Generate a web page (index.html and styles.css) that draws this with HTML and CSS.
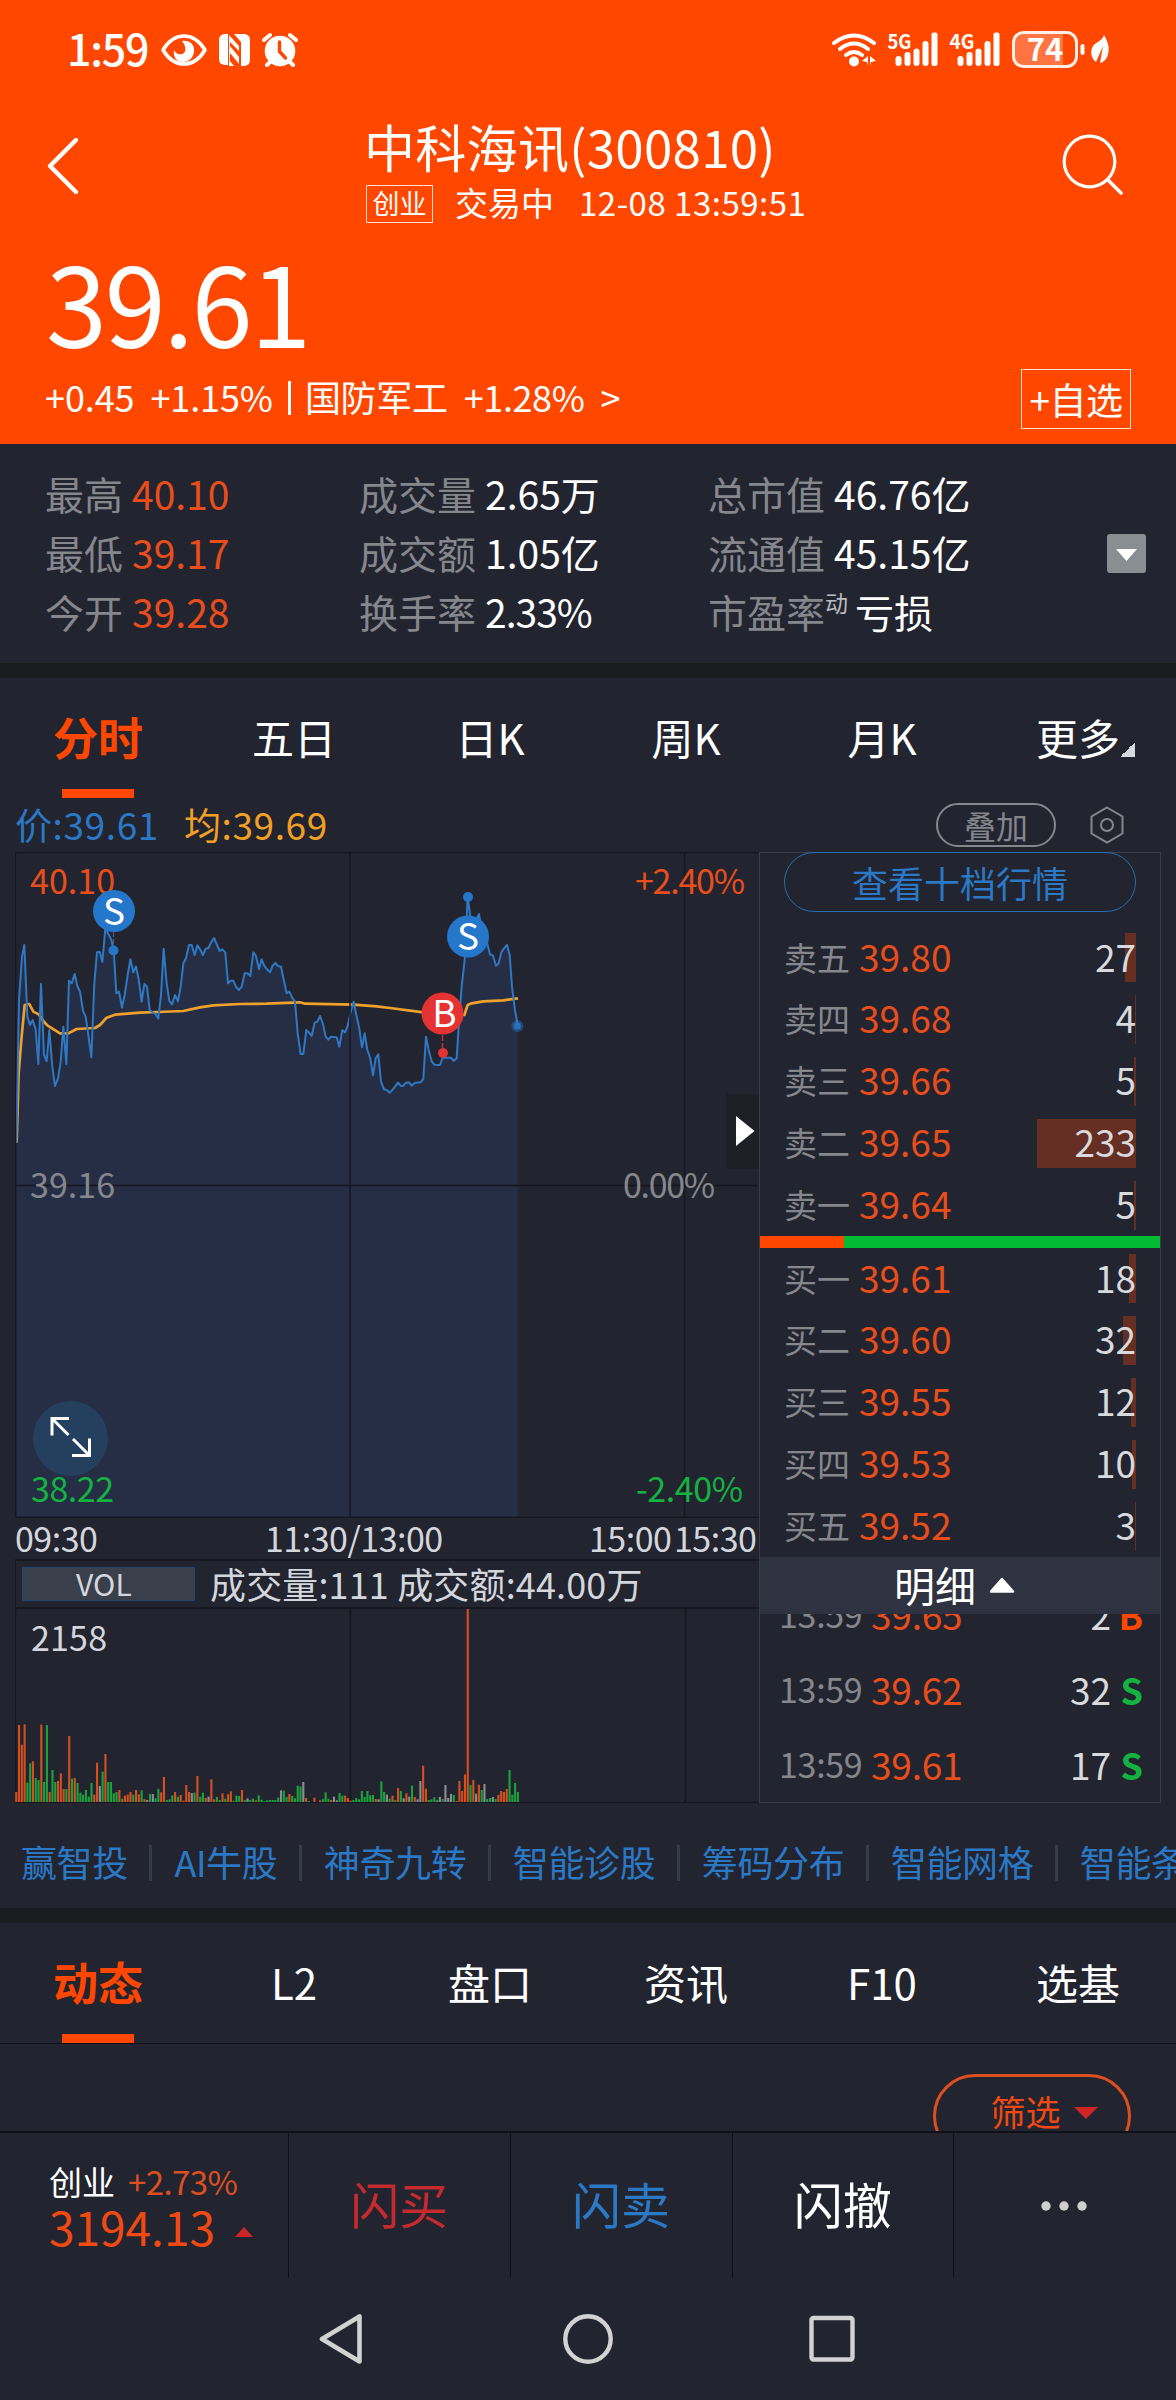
FILE: index.html
```html
<!DOCTYPE html>
<html lang="zh-CN">
<head>
<meta charset="utf-8">
<title>中科海讯(300810)</title>
<link rel="stylesheet" href="styles.css">
</head>
<body>
<div class="phone">
  <header class="top">
    <div class="status">
      <div class="status-left">
        <span class="clock">1:59</span>
        <svg class="ico-eye" width="46" height="34" viewBox="0 0 46 34"><path d="M2 17C8 7 15 3 23 3s15 4 21 14c-6 10-13 14-21 14S8 27 2 17z" fill="none" stroke="#fff" stroke-width="3.6" stroke-linejoin="round"/><path d="M21 8c8-1 13 4 12 11-1 6-5 10-11 10s-10-4-9-12c2 4 5 5 8 4 4-1 5-7 0-13z" fill="#fff"/></svg>
        <svg class="ico-nfc" width="31" height="34" viewBox="0 0 31 34"><path d="M7 1h2v31H7c-5 0-7-2-7-7V8c0-5 2-7 7-7zM24 1h-9l7 8v24h2c5 0 7-2 7-7V8c0-5-2-7-7-7z" fill="#fff"/><path d="M10 2v31h5l-4-5v-8l9 11v-7L11 13V9l9 9v-5L10 2z" fill="#fff"/></svg>
        <svg class="ico-alarm" width="36" height="35" viewBox="0 0 36 35"><circle cx="18" cy="19" r="15.3" fill="#fff"/><path d="M2 8l6-5M34 8l-6-5M8 30l-3 3M28 30l3 3" stroke="#fff" stroke-width="4" stroke-linecap="round"/><path d="M17.500 10v9.500l6 6.500" fill="none" stroke="#ff4700" stroke-width="3.400" stroke-linecap="round"/></svg>
      </div>
      <svg class="status-right" width="280" height="40" viewBox="830 30 280 40">
        <g fill="none" stroke="#fff" stroke-width="4" stroke-linecap="round"><path d="M834 43q20-15 40 0M840 49q14-11 28 0M846 55q8-6 16 0"/></g>
        <circle cx="854" cy="61.500" r="5" fill="#fff"/>
        <path d="M862 61l6-5v10l-1-4zM876 61l-6-5v10l1-4z" fill="#fff"/>
        <g fill="#fff">
          <rect x="895.500" y="56" width="6" height="10" rx="3"/><rect x="904.500" y="52" width="6" height="14" rx="3"/><rect x="913.500" y="48.500" width="6" height="17.500" rx="3"/><rect x="922.500" y="41" width="6" height="25" rx="3"/><rect x="931.500" y="32.500" width="6" height="33.500" rx="2"/>
          <rect x="957.500" y="56" width="6" height="10" rx="3"/><rect x="966.500" y="52" width="6" height="14" rx="3"/><rect x="975.500" y="48.500" width="6" height="17.500" rx="3"/><rect x="984.500" y="41" width="6" height="25" rx="3"/><rect x="993.500" y="32.500" width="6" height="33.500" rx="2"/>
        </g>
        <text class="net" x="887.500" y="49" textLength="24" lengthAdjust="spacingAndGlyphs">5G</text>
        <text class="net" x="949.500" y="49" textLength="25" lengthAdjust="spacingAndGlyphs">4G</text>
        <path d="M1025 33h38v33h-38q-11 0-11-10V43q0-10 11-10z" fill="#ff7441"/>
        <rect x="1013.500" y="32.500" width="63" height="34" rx="10" fill="none" stroke="#ffefe8" stroke-width="3"/>
        <text class="batt" x="1045" y="61" text-anchor="middle">74</text>
        <rect x="1080.500" y="44" width="4" height="11" rx="2" fill="#fff"/>
        <path d="M1104 35c4 7 6 13 4 19-1 5-4 8-8 9l3-17-7 16c-4-3-6-9-4-14 2-6 10-6 12-13z" fill="#fff"/>
      </svg>
    </div>
    <div class="titlebar">
      <svg width="36" height="60" viewBox="0 0 36 60"><path d="M32 6L6 32l26 26" transform="translate(-1 -2)" fill="none" stroke="#fff" stroke-width="4.400" stroke-linecap="round" stroke-linejoin="round"/></svg>
      <div class="title-mid">
        <h1>中科海讯(300810)</h1>
        <div class="sub"><span class="board">创业</span><span class="state">交易中</span><span class="stamp">12-08 13:59:51</span></div>
      </div>
      <svg width="62" height="62" viewBox="0 0 62 62"><circle cx="27.500" cy="28.500" r="25.300" fill="none" stroke="#fff" stroke-width="3.200"/><path d="M45.500 46.500L59 60" stroke="#fff" stroke-width="3.600" stroke-linecap="round"/></svg>
    </div>
    <div class="price">39.61</div>
    <div class="change">
      <span>+0.45</span><span class="g1">+1.15%</span><i class="bar"></i><span class="g0">国防军工</span><span class="g2">+1.28%</span><span class="g3">&gt;</span>
      <button class="fav">+自选</button>
    </div>
  </header>

  <section class="stats">
    <dl><dt>最高</dt><dd class="up">40.10</dd></dl><dl><dt>成交量</dt><dd>2.65万</dd></dl><dl><dt>总市值</dt><dd>46.76亿</dd></dl>
    <dl><dt>最低</dt><dd class="up">39.17</dd></dl><dl><dt>成交额</dt><dd>1.05亿</dd></dl><dl class="with-more"><dt>流通值</dt><dd>45.15亿</dd><svg class="more-btn" width="39" height="39" viewBox="0 0 39 39"><rect width="39" height="39" rx="3" fill="#898e92"/><path d="M9 15h21L19.500 27z" fill="#fff"/></svg></dl>
    <dl><dt>今开</dt><dd class="up">39.28</dd></dl><dl><dt>换手率</dt><dd class="tight">2.33%</dd></dl><dl><dt>市盈率<sup>动</sup></dt><dd>亏损</dd></dl>
  </section>

  <nav class="tabs period"><a class="on">分时</a><a>五日</a><a>日K</a><a>周K</a><a>月K</a><a class="more">更多</a></nav>

  <div class="legend">
    <span class="now">价:39.61</span><span class="avg">均:39.69</span>
    <button class="overlay">叠加</button>
    <svg width="34" height="38" viewBox="0 0 34 38"><path d="M17 1.500l15.500 9v17L17 36.500l-15.500-9v-17z" fill="none" stroke="#85878d" stroke-width="2"/><circle cx="17" cy="19" r="6" fill="none" stroke="#85878d" stroke-width="2"/></svg>
  </div>

  <main class="market">
    <section class="charts">
      <svg class="trend" width="745" height="666" viewBox="15 852 745 666">
        <g transform="translate(0 840) scale(.33333)" fill="none" stroke-linejoin="round">
          <path fill="#262e46" d="M49 2031V908L57 480L66 350L73 315L82 530L90 555L98 540L107 568L115 672L123 432L132 645L140 663L148 570L157 680L165 738L174 715L182 665L190 560L199 672L207 422L215 430L224 402L232 438L240 455L249 512L257 530L265 585L274 652L283 430L291 337L299 335L307 366L316 265L341 331L349 460L357 455L366 503L374 465L383 405L391 358L400 397L408 379L416 418L425 485L433 432L441 440L449 510L475 535L483 465L491 326L500 430L508 483L516 493L525 465L534 484L542 440L550 370L567 315L575 315L584 346L592 316L609 345L617 326L625 324L642 294L659 333L667 328L676 337L684 430L700 422L717 450L734 400L751 408L760 337L768 348L777 388L785 358L793 378L810 397L826 369L843 380L860 460L885 485L893 580L902 642L910 642L919 570L935 588L944 548L960 528L977 590L985 599L1010 592L1018 620L1027 570L1035 577L1061 485L1086 622L1094 580L1119 706L1127 655L1135 643L1143 725L1169 758L1194 728L1262 727L1270 716L1278 590L1295 664L1303 674L1320 675L1328 653L1353 653L1370 655L1376 560L1395 350L1403 170L1420 290L1437 222L1470 343L1488 377L1504 337L1521 315L1529 345L1536 440L1545 510L1553 556V2031z"/>
          <path class="avg-line" d="M50 908L56 700L64 600L74 495L88 492L100 515L116 523L130 543L142 556L180 580L205 580L230 567L285 564L300 555L320 533L345 524L420 518L475 516L550 513L600 502L640 496L720 492L800 491L900 487L915 491L1060 494L1130 499L1170 504L1270 517L1393 525L1403 495L1415 490L1450 484L1510 481L1554 475"/>
          <path class="now-line" d="M49 908L57 480L66 350L73 315L82 530L90 555L98 540L107 568L115 672L123 432L132 645L140 663L148 570L157 680L165 738L174 715L182 665L190 560L199 672L207 422L215 430L224 402L232 438L240 455L249 512L257 530L265 585L274 652L283 430L291 337L299 335L307 366L316 265L325 282L334 300L341 331L349 460L357 455L366 503L374 465L383 405L391 358L400 397L408 379L416 418L425 485L433 432L441 440L449 510L458 517L466 522L475 535L483 465L491 326L500 430L508 483L516 493L525 465L534 484L542 440L550 370L558 355L567 315L575 315L584 346L592 316L600 328L609 345L617 326L625 324L633 308L642 294L650 312L659 333L667 328L676 337L684 430L692 422L700 422L709 442L717 450L725 440L734 400L742 400L751 408L760 337L768 348L777 388L785 358L793 378L801 388L810 397L818 377L826 369L834 378L843 380L851 418L860 460L868 455L876 472L885 485L893 580L902 642L910 642L919 570L927 578L935 588L944 548L952 545L960 528L969 552L977 590L985 599L993 590L1010 592L1018 620L1027 570L1035 577L1044 555L1052 515L1061 485L1069 525L1077 560L1086 622L1094 580L1102 630L1111 655L1119 706L1127 655L1135 643L1143 725L1152 748L1160 750L1169 758L1177 750L1185 740L1194 728L1202 738L1210 737L1218 728L1227 727L1235 737L1245 728L1262 727L1270 716L1278 590L1286 630L1295 664L1303 674L1320 675L1328 653L1353 653L1361 663L1370 655L1376 560L1385 440L1395 350L1403 170L1411 230L1420 290L1428 240L1437 222L1445 270L1454 290L1462 312L1470 343L1479 347L1488 377L1496 370L1504 337L1512 325L1521 315L1529 345L1536 440L1545 510L1553 556"/>
        </g>
        <path class="grid" d="M15.500 852.500H760M15.500 852.500V1517M15.500 1185.500H757M350 852.500V1517M684.500 852.500V1517M15.500 1517.500H760"/>
        <rect x="726" y="1094" width="33" height="75" fill="#1e1f27"/><path d="M736 1116v30l18.500-15z" fill="#fff"/>
        <text class="t up" x="30" y="894" textLength="85">40.10</text><text class="t up" x="635" y="894" textLength="110">+2.40%</text>
        <text class="t mid" x="30" y="1198" textLength="85">39.16</text><text class="t mid" x="623" y="1198" textLength="92">0.00%</text>
        <circle cx="70.500" cy="1438.500" r="37.500" fill="#25405f"/>
        <path d="M69 1418.500H52v17M52.500 1419l16 16M72 1455.500h17.500v-17M89 1455l-16-16" fill="none" stroke="#fff" stroke-width="3"/>
        <text class="t down" x="31" y="1502" textLength="83">38.22</text><text class="t down" x="636" y="1502" textLength="107">-2.40%</text>
        <g fill="#2577cb"><circle cx="114" cy="911" r="21"/><circle cx="113.500" cy="950.500" r="5"/><circle cx="468" cy="936.500" r="21"/><circle cx="468" cy="897" r="5"/></g>
        <path d="M113.500 932v14" stroke="#586474" stroke-dasharray="5 2"/>
        <g fill="#e53333"><circle cx="442.500" cy="1013.500" r="21"/><circle cx="443" cy="1053" r="5"/></g><path d="M442.500 1035v14" stroke="#b53339" stroke-width="1.500" stroke-dasharray="6 2"/>
        <circle cx="517.500" cy="1026" r="6" fill="#2577cb" opacity=".45"/><circle cx="517.500" cy="1026" r="3.500" fill="#2577cb" opacity=".8"/>
        <text class="mark" x="114" y="924.500">S</text><text class="mark" x="468" y="950">S</text><text class="mark" x="444.500" y="1027">B</text>
      </svg>
      <div class="axis"><span>09:30</span><span>11:30/13:00</span><span>15:00</span><span>15:30</span></div>
      <div class="volhead"><span class="vol">VOL</span><span>成交量:111 成交额:44.00万</span></div>
      <svg class="volume" width="745" height="195" viewBox="15 1608 745 195">
        <path class="grid" d="M15.500 1608V1802M350.500 1608V1802M685.500 1608V1802M15 1802.500H760"/>
        <g id="bars"></g>
        <text class="t val" x="31" y="1651" textLength="76">2158</text>
      </svg>
    </section>
    <aside class="book">
      <button class="ten">查看十档行情</button>
      <ul class="levels asks">
        <li><span>卖五</span><b>39.80</b><em>27</em><i style="width:11px"></i></li>
        <li><span>卖四</span><b>39.68</b><em>4</em><i style="width:1px"></i></li>
        <li><span>卖三</span><b>39.66</b><em>5</em><i style="width:2px"></i></li>
        <li><span>卖二</span><b>39.65</b><em>233</em><i style="width:99px"></i></li>
        <li><span>卖一</span><b>39.64</b><em>5</em><i style="width:2px"></i></li>
      </ul>
      <div class="ratio"><i style="width:84px"></i></div>
      <ul class="levels bids">
        <li><span>买一</span><b>39.61</b><em>18</em><i style="width:7px"></i></li>
        <li><span>买二</span><b>39.60</b><em>32</em><i style="width:13px"></i></li>
        <li><span>买三</span><b>39.55</b><em>12</em><i style="width:5px"></i></li>
        <li><span>买四</span><b>39.53</b><em>10</em><i style="width:4px"></i></li>
        <li><span>买五</span><b>39.52</b><em>3</em><i style="width:1px"></i></li>
      </ul>
      <div class="detail">明细<svg width="26" height="16" viewBox="0 0 26 16"><path d="M2 14.500L13 2l11 12.500z" fill="#fff" stroke="#fff" stroke-width="2.500" stroke-linejoin="round"/></svg></div>
      <ul class="ticks">
        <li><span>13:59</span><b>39.65</b><em>2</em><strong class="buy">B</strong></li>
        <li><span>13:59</span><b>39.62</b><em>32</em><strong>S</strong></li>
        <li><span>13:59</span><b>39.61</b><em>17</em><strong>S</strong></li>
      </ul>
    </aside>
  </main>

  <nav class="links"><a>赢智投</a><a>AI牛股</a><a>神奇九转</a><a>智能诊股</a><a>筹码分布</a><a>智能网格</a><a>智能条件单</a></nav>

  <nav class="tabs info"><a class="on">动态</a><a>L2</a><a>盘口</a><a>资讯</a><a>F10</a><a>选基</a></nav>
  <div class="feed"><button class="filter">筛选<svg width="24" height="12" viewBox="0 0 24 12"><path d="M0 0h24L12 12z" fill="#d02427"/></svg></button></div>

  <footer class="actions">
    <div class="index"><div><span>创业</span><span class="pct">+2.73%</span></div><div class="pts">3194.13<svg width="18" height="10" viewBox="0 0 18 10"><path d="M0 10L9 0l9 10z" fill="#cf2529"/></svg></div></div>
    <a class="red">闪买</a><a class="blue">闪卖</a><a>闪撤</a>
    <a><svg width="48" height="10" viewBox="0 0 48 10"><g fill="#cfcfcf"><circle cx="5" cy="5" r="4.700"/><circle cx="23" cy="5" r="4.700"/><circle cx="41" cy="5" r="4.700"/></g></svg></a>
  </footer>
  <div class="sysnav">
    <svg width="44" height="52" viewBox="0 0 44 52"><path d="M40.500 3.500v45L3 26z" fill="none" stroke="#d2d2d2" stroke-width="4.600" stroke-linejoin="round"/></svg>
    <svg width="50" height="52" viewBox="0 0 50 52"><circle cx="25" cy="26" r="22.700" fill="none" stroke="#d2d2d2" stroke-width="4.400"/></svg>
    <svg width="46" height="52" viewBox="0 0 46 52"><rect x="2.500" y="5" width="41" height="41.500" rx="2" fill="none" stroke="#d2d2d2" stroke-width="4.400"/></svg>
  </div>
</div>
<script src="chart.js"></script>
</body>
</html>
```
FILE: styles.css
```css
* { box-sizing: border-box; margin: 0; padding: 0; }
body {
  width: 1176px; height: 2400px; overflow: hidden;
  background: #222430; color: #fff;
  font-family: "Noto Sans CJK SC", "Noto Sans", sans-serif;
}
svg { display: block; flex: none; }
ul { list-style: none; }
button { background: none; color: inherit; font-family: inherit; }
i, em { font-style: normal; }
b { font-weight: 400; }
span, b, em, a, dt, dd { white-space: nowrap; }
.phone { height: 2400px; display: flex; flex-direction: column; }
.phone > * { flex: none; }
.up { color: #e84e1b; fill: #e84e1b; }

/* header */
.top { height: 444px; background: #ff4700; }
.status { height: 100px; padding: 0 66px 0 67px; display: flex; justify-content: space-between; align-items: center; }
.status-left { display: flex; align-items: center; }
.clock { font-size: 43px; line-height: 60px; font-weight: 500; letter-spacing: -1.3px; width: 94px; margin-top: -6px; }
.ico-nfc { margin-left: 12px; }
.ico-alarm { margin-left: 12px; margin-top: -2px; }
.status-right { overflow: visible; }
.net { font-size: 20px; font-weight: 700; fill: #fff; }
.batt { font-size: 31px; font-weight: 700; fill: #fff; }
.titlebar { height: 140px; padding: 0 52px 0 45px; display: flex; align-items: flex-start; }
.titlebar > svg:first-child { margin-top: 36px; }
.titlebar > svg:last-child { margin-top: 33px; margin-left: auto; }
.title-mid { width: 444px; margin-left: 283px; }
h1 { font-size: 51px; line-height: 60px; font-weight: 400; letter-spacing: .3px; margin-top: 16px; white-space: nowrap; }
.sub { display: flex; align-items: center; margin: 6px 0 0 2px; height: 44px; font-size: 33px; line-height: 44px; }
.board { width: 67px; height: 38px; border: 1px solid #ffe0c8; font-size: 27px; line-height: 33px; text-align: center; }
.state { margin-left: 22px; margin-top: -5px; }
.stamp { margin-left: 25px; margin-top: -5px; letter-spacing: .5px; }
.price { height: 133px; padding-left: 46px; font-size: 110px; line-height: 130px; letter-spacing: -2.400px; margin-top: -5px; }
.change { height: 62px; padding-left: 45px; padding-right: 45px; display: flex; align-items: center; font-size: 36px; line-height: 56px; letter-spacing: -.1px; }
.change span { margin-top: -7px; }
.change .g1 { margin-left: 16px; }
.change .bar { width: 3px; height: 34px; background: #fff; margin: -3px 14px 0 15px; }
.change .g0 { letter-spacing: -.3px; }
.change .g2 { margin-left: 16px; letter-spacing: -.4px; }
.change .g3 { margin-left: 16px; }
.fav { margin-left: auto; width: 110px; height: 60px; border: 1px solid #ffe0c8; font-size: 37px; line-height: 50px; letter-spacing: -.5px; }

/* key figures */
.stats { height: 234px; border-bottom: 15px solid #1b1c1f; padding: 20px 30px 0 45px; display: grid; grid-template-columns: 314px 349px 1fr; grid-auto-rows: 59px; }
.stats dl { display: flex; align-items: center; gap: 9px; font-size: 39px; line-height: 59px; }
.stats dt { color: #85878d; }
.stats .tight { letter-spacing: -1px; }
.stats sup { font-size: 23px; line-height: 20px; color: #b9bcc2; vertical-align: 16px; margin-right: -2px; }
.more-btn { margin-left: auto; margin-top: 2px; }

/* tab rows */
.tabs { display: grid; grid-template-columns: repeat(6, 196px); }
.tabs a { display: flex; justify-content: center; font-size: 42px; line-height: 116px; position: relative; }
.tabs .on { color: #ff4700; font-weight: 700; font-size: 45px; }
.tabs .on::after { content: ""; position: absolute; left: 62px; bottom: 0; width: 72px; height: 9px; background: #ff4700; }
.period { height: 120px; }
.period a { line-height: 117px; }
.period .more::after { content: ""; position: absolute; left: 140px; top: 64px; width: 15px; height: 15px; background: linear-gradient(135deg, transparent 50%, #d5dae0 50%); }
.info { height: 121px; border-bottom: 1px solid #101118; }
.info a { line-height: 117px; }

/* chart legend */
.legend { height: 54px; padding: 0 52px 0 15px; display: flex; align-items: center; font-size: 37px; line-height: 54px; letter-spacing: .6px; }
.legend span { margin-top: -3px; }
.now { color: #2b78c5; }
.avg { color: #f2a024; margin-left: 25px; }
.overlay { margin-left: auto; margin-right: 34px; width: 120px; height: 44px; border: 2px solid #85878d; border-radius: 22px; color: #85878d; font-size: 32px; line-height: 36px; letter-spacing: 0; }

/* chart and order book */
.market { display: flex; height: 951px; }
.charts { width: 759px; padding-left: 15px; }
.grid { fill: none; stroke: #15161e; stroke-width: 1.4; }
.now-line { stroke: #2f78c4; stroke-width: 6; }
.avg-line { stroke: #f0a12b; stroke-width: 8; }
.t { font-size: 34px; }
.mid { fill: #85878d; }
.down { fill: #14b240; }
.val { fill: #d4d6dd; }
.mark { font: 400 37px "Noto Sans CJK SC", sans-serif; fill: #fff; text-anchor: middle; }
.axis { display: grid; grid-template-columns: 250px 324px 85px 85px; height: 43px; border-bottom: 2px solid #171820; font-size: 34px; line-height: 40px; color: #d4d6dd; letter-spacing: -.5px; }
.volhead { display: flex; align-items: center; height: 48px; border-bottom: 2px solid #171820; border-left: 1px solid #171820; padding-left: 6px; font-size: 36px; letter-spacing: .15px; color: #d4d6dd; }
.volhead span { line-height: 40px; margin-top: -3px; }
.volhead .vol { width: 173px; height: 34px; margin: 0 15px 0 0; border: 1px solid #2b4570; background: #393f4b; font-size: 30px; line-height: 30px; padding-right: 9px; text-align: center; }
.volume { margin-top: -1px; }
.book { width: 402px; border: 1px solid #3a3d48; display: flex; flex-direction: column; }
.ten { align-self: center; flex: none; width: 352px; height: 60px; border: 1.5px solid #2b6bb0; border-radius: 30px; color: #2b78c5; font-size: 36px; line-height: 48px; margin-top: -1px; padding-bottom: 1px; }
.levels { padding: 0 24px; }
.levels li { display: flex; align-items: center; position: relative; height: 49px; margin-bottom: 12.9px; line-height: 44px; }
.levels span { font-size: 33px; color: #85878d; width: 75px; margin-top: -2px; }
.levels b, .ticks b { font-size: 37px; color: #e84e1b; margin-top: -4px; }
.levels em, .ticks em { font-size: 37px; color: #d8dade; margin-left: auto; margin-top: -4px; position: relative; z-index: 1; }
.levels i { position: absolute; right: 0; top: 0; height: 49px; background: #652f23; }
.asks { margin-top: 21px; height: 303px; flex: none; }
.ratio { height: 12px; background: #00bb33; flex: none; }
.ratio i { display: block; height: 12px; background: #ff4700; }
.bids { margin-top: 6px; height: 303px; flex: none; }
.detail { height: 57px; flex: none; background: #2f3240; display: flex; justify-content: center; align-items: center; gap: 13px; font-size: 41px; line-height: 50px; padding-right: 11px; padding-bottom: 4px; position: relative; z-index: 1; }
.detail svg { margin-top: 3px; }
.ticks { height: 188px; overflow: hidden; padding: 0 17px 0 19px; }
.ticks li { display: flex; align-items: center; height: 75px; line-height: 50px; }
.ticks li:first-child { margin-top: -36px; }
.ticks span { font-size: 34px; color: #85878d; width: 92px; margin-top: -4px; letter-spacing: -.3px; }
.ticks b { letter-spacing: -.2px; }
.ticks strong { font-size: 36px; width: 32px; text-align: right; color: #14b240; margin-top: -4px; }
.ticks .buy { color: #ff4700; }

/* shortcut links */
.links { height: 120px; overflow: hidden; border-bottom: 15px solid #1b1c1f; padding-left: 21px; display: flex; align-items: center; }
.links a { flex: none; font-size: 36px; line-height: 50px; letter-spacing: -.4px; color: #2b78c5; padding-right: 22px; margin-top: 10px; display: flex; align-items: center; }
.links a::after { content: ""; flex: none; width: 3px; height: 36px; background: #363c4a; margin: 4px 0 0 21.600px; }

/* feed, actions, system keys */
.feed { height: 87px; overflow: hidden; padding: 30px 45px 0; display: flex; justify-content: flex-end; }
.filter { flex: none; width: 198px; height: 84px; border: 3px solid #dc4f20; border-radius: 42px; color: #f04a12; font-size: 35px; line-height: 60px; display: flex; justify-content: center; align-items: center; gap: 13px; padding: 0 0 10px 24px; }
.filter svg { margin-top: 3px; }
.actions { height: 147px; border-top: 2px solid #101118; display: grid; grid-template-columns: 289px repeat(4, 1fr); }
.actions > * { border-right: 1px solid #101118; }
.actions > :last-child { border: 0; }
.actions a { display: flex; align-items: center; justify-content: center; font-size: 49px; line-height: 60px; padding-bottom: 6px; }
.actions a:last-child { padding-bottom: 0; }
.red { color: #c52a2e; }
.blue { color: #2b78c5; }
.index { padding: 26px 0 0 49px; font-size: 33px; line-height: 44px; }
.pct { color: #dc4f20; margin-left: 13px; font-size: 33px; letter-spacing: -.6px; }
.pts { display: flex; align-items: center; gap: 20px; color: #f04a12; font-size: 46px; line-height: 50px; height: 54px; margin-top: -4px; }
.pts svg { margin-top: 12px; }
.sysnav { height: 121px; display: flex; padding: 35px 0 0 319px; }
.sysnav svg:nth-child(2) { margin-left: 200px; }
.sysnav svg:nth-child(3) { margin-left: 196px; }
```
FILE: chart.js
```js
// One entry per minute: r = up, g = down, w = flat, followed by the bar height in thirds of a pixel.
const minutes = ("r30 r231 r172 r233 g58 g116 r122 g72 g66 r232 g60 g231 r30 g96 g60 r63 r86 r39 g39 r198 g70 r72 g57 g28 g22 g36 g16 g57 r22 r118 " +
  "w48 g91 r144 g60 g60 g26 g30 r36 g10 r19 r22 r30 g22 r36 r23 g35 r9 w6 g24 w24 g11 g39 r29 r75 g6 g8 g20 r30 g16 r21 " +
  "r4 r51 r30 w27 g28 r78 g16 g28 r12 w16 r68 r8 g15 g6 r26 g10 r23 r32 g4 g19 g18 r36 g6 w11 g6 g10 r5 g20 g7 g3 " +
  "g5 g6 g6 g6 g13 w35 g34 g15 r24 g18 g11 g49 g47 w60 r12 g3 w0 r13 w0 r5 g9 g29 g10 r6 w16 w5 g27 g19 r19 r12 " +
  "r4 g6 g12 g8 g33 g15 g33 g20 g21 r9 w8 g62 g30 w22 g10 r19 g6 r42 g33 w11 r26 w16 g49 r15 w8 w63 r109 r40 g6 g8 " +
  "g14 w5 w15 g9 w51 w12 w24 g21 r3 r63 r33 r83 r579 g51 r66 w25 r52 g36 w54 g9 g12 w15 g9 r21 r33 r30 r39 g96 g22 g57 g30").split(" ");
const colors = { r: "#d4501f", g: "#1ca23c", w: "#8b8d94" };
const bars = document.getElementById("bars");
minutes.forEach((m, i) => {
  const h = m.slice(1) / 3;
  const rect = document.createElementNS("http://www.w3.org/2000/svg", "rect");
  rect.setAttribute("x", 15.2 + i * 2.787);
  rect.setAttribute("y", 1802 - h);
  rect.setAttribute("width", 2.1);
  rect.setAttribute("height", h);
  rect.setAttribute("fill", colors[m[0]]);
  bars.appendChild(rect);
});
```
